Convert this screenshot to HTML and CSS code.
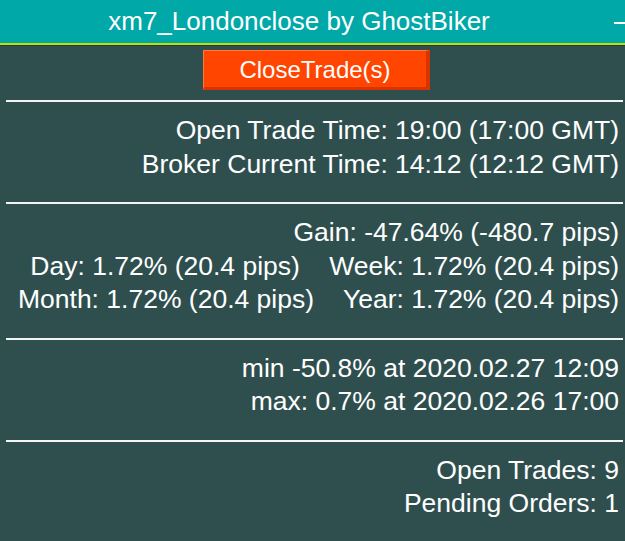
FILE: index.html
```html
<!DOCTYPE html>
<html>
<head>
<meta charset="utf-8">
<link rel="stylesheet" href="styles.css">
</head>
<body>
<div class="panel">
  <div class="titlebar">
    <span class="title">xm7_Londonclose by GhostBiker</span>
    <span class="minimize"></span>
  </div>
  <div class="btnrow">
    <div class="btn">CloseTrade(s)</div>
  </div>
  <div class="rule"></div>
  <div class="section">
    <div class="line">Open Trade Time: 19:00 (17:00 GMT)</div>
    <div class="line">Broker Current Time: 14:12 (12:12 GMT)</div>
  </div>
  <div class="rule"></div>
  <div class="section">
    <div class="line">Gain: -47.64% (-480.7 pips)</div>
    <div class="line">Day: 1.72% (20.4 pips)    Week: 1.72% (20.4 pips)</div>
    <div class="line">Month: 1.72% (20.4 pips)    Year: 1.72% (20.4 pips)</div>
  </div>
  <div class="rule"></div>
  <div class="section">
    <div class="line">min -50.8% at 2020.02.27 12:09</div>
    <div class="line">max: 0.7% at 2020.02.26 17:00</div>
  </div>
  <div class="rule"></div>
  <div class="section">
    <div class="line">Open Trades: 9</div>
    <div class="line">Pending Orders: 1</div>
  </div>
</div>
</body>
</html>
```
FILE: styles.css
```css
html, body {
  margin: 0;
  padding: 0;
  background: #2f4f4f;
}
.panel {
  width: 625px;
  height: 541px;
  overflow: hidden;
  background: #2f4f4f;
  font-family: "Liberation Sans", Arial, sans-serif;
  color: #ffffff;
}
.titlebar {
  position: relative;
  height: 43px;
  background: #00a8a8;
  border-bottom: 2px solid #c4dc00;
  box-shadow: 0 1px 0 #1f3f3f;
  display: flex;
  align-items: center;
  justify-content: center;
  padding-right: 27px;
}
.title {
  font-size: 26px;
  line-height: 45px;
  white-space: nowrap;
}
.minimize {
  position: absolute;
  right: 0;
  top: 22px;
  width: 11px;
  height: 2px;
  background: #ffffff;
}
.btnrow {
  display: flex;
  padding-top: 5px;
  padding-left: 203px;
  height: 50px;
}
.btn {
  width: 222px;
  height: 36px;
  background: #ff4500;
  border-top: 1px solid #ff7a3a;
  border-left: 1px solid #ff7a3a;
  border-right: 4px solid #d93400;
  border-bottom: 3px solid #d93400;
  font-size: 24px;
  line-height: 37px;
  text-align: center;
}
.rule {
  height: 2px;
  margin: 0 2px 0 6px;
  background: #f4f4f4;
}
.section {
  padding: 12px 6px 21px 0;
  text-align: right;
}
.line {
  font-size: 26.5px;
  line-height: 33.5px;
  white-space: pre;
}
```
